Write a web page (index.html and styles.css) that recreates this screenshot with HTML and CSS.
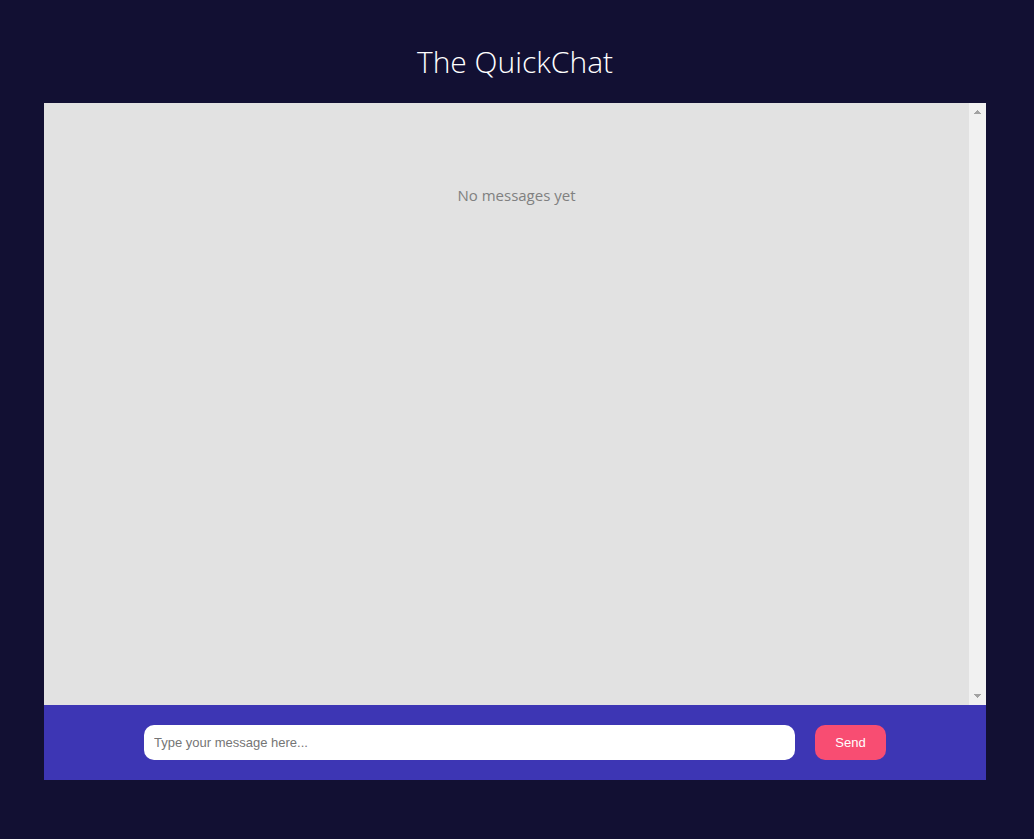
FILE: index.html
```html
<!DOCTYPE html>
<html lang="en">
<head>
<meta charset="utf-8">
<title>The QuickChat</title>
<link rel="stylesheet" href="styles.css">
</head>
<body>
<main class="app">
  <h1 class="title">The QuickChat</h1>
  <section class="chat">
    <div class="messages">
      <p class="empty">No messages yet</p>
      <div class="scrollbar" aria-hidden="true">
        <svg class="arrow" viewBox="0 0 7 4" shape-rendering="crispEdges"><path d="M3 0h1v1h1v1h1v1h1v1H0V3h1V2h1V1h1z"/></svg>
        <svg class="arrow" viewBox="0 0 7 4" shape-rendering="crispEdges"><path d="M0 0h7v1H6v1H5v1H4v1H3V3H2V2H1V1H0z"/></svg>
      </div>
    </div>
    <form class="composer">
      <input class="field" type="text" aria-label="Message" placeholder="Type your message here...">
      <button class="send" type="button">Send</button>
    </form>
  </section>
</main>
</body>
</html>
```
FILE: styles.css
```css
* { box-sizing: border-box; }
body {
  margin: 0;
  background: #121033;
  font-family: "Segoe UI", "Open Sans", sans-serif;
}
.app {
  display: flex;
  flex-direction: column;
  min-height: 100vh;
  padding: 40px 48px 59px 44px;
}
.title {
  margin: 0 0 20px;
  color: #fff;
  font-size: 30px;
  font-weight: 300;
  line-height: 43px;
  text-align: center;
}
.chat {
  flex: 1;
  display: flex;
  flex-direction: column;
}
.messages {
  flex: 1;
  display: flex;
  background: #e2e2e2;
}
.empty {
  flex: 1;
  margin: 80px 0 0;
  padding-left: 20px;
  color: #808080;
  font-size: 15px;
  line-height: 24px;
  text-align: center;
}
.scrollbar {
  display: flex;
  flex-direction: column;
  justify-content: space-between;
  align-items: center;
  width: 17px;
  padding: 7px 0;
  background: #f1f1f1;
}
.arrow {
  width: 7px;
  height: 4px;
  fill: #a3a3a3;
}
.composer {
  display: flex;
  gap: 20px;
  padding: 20px 100px;
  background: #3d36b4;
}
.field, .send {
  height: 35px;
  border: 0;
  border-radius: 10px;
  font-family: "Liberation Sans", Arial, sans-serif;
  font-size: 13px;
}
.field {
  flex: 1;
  min-width: 0;
  padding: 0 10px;
  background: #fff;
}
.field::placeholder { color: #757575; }
.send {
  width: 71px;
  padding: 0;
  background: #f84d72;
  color: #fff;
}
```
